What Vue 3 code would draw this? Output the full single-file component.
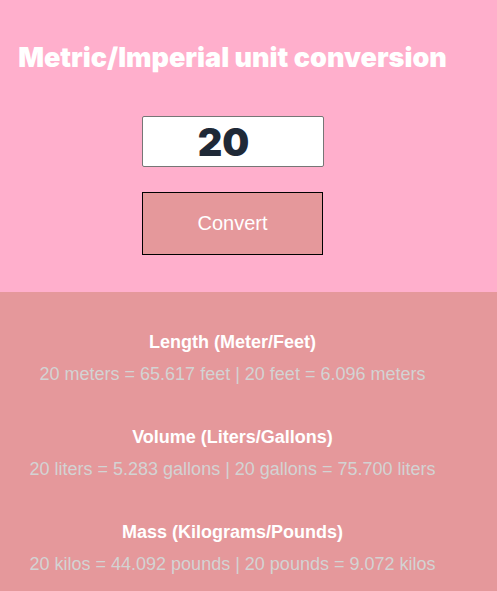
<script setup>
import { ref } from 'vue'

const amount = ref(20)
const shown = ref(20)

const groups = [
  { title: 'Length (Meter/Feet)', metric: 'meters', imperial: 'feet', toImperial: 3.28084, toMetric: 0.3048 },
  { title: 'Volume (Liters/Gallons)', metric: 'liters', imperial: 'gallons', toImperial: 0.264172, toMetric: 3.785 },
  { title: 'Mass (Kilograms/Pounds)', metric: 'kilos', imperial: 'pounds', toImperial: 2.20462, toMetric: 0.453592 }
]

function describe(g) {
  const n = shown.value
  return `${n} ${g.metric} = ${(n * g.toImperial).toFixed(3)} ${g.imperial} | ${n} ${g.imperial} = ${(n * g.toMetric).toFixed(3)} ${g.metric}`
}
</script>

<template>
  <main class="page">
    <form class="converter" @submit.prevent="shown = Number(amount)">
      <h1>Metric/Imperial unit conversion</h1>
      <input v-model="amount" class="amount" type="number" aria-label="Value to convert" />
      <button class="convert" type="submit">Convert</button>
    </form>
    <div class="results">
      <section v-for="g in groups" :key="g.title" class="group">
        <h2>{{ g.title }}</h2>
        <p>{{ describe(g) }}</p>
      </section>
    </div>
  </main>
</template>

<style>
body {
  background: #e5989b;
}
</style>

<style scoped>
.page {
  font-family: "Liberation Sans", Arial, sans-serif;
  text-align: center;
}
.converter {
  display: flex;
  flex-direction: column;
  align-items: center;
  padding: 40px 32px 37px 0;
  background: #ffafcc;
}
h1 {
  margin: 0 0 41px;
  color: #fff;
  font-family: Inter, "Liberation Sans", sans-serif;
  font-size: 27px;
  line-height: 35px;
  font-weight: 900;
}
.amount {
  box-sizing: border-box;
  width: 182px;
  height: 51px;
  padding: 0 18px 0 0;
  border: 1px solid #767676;
  border-radius: 2px;
  background: #fff;
  color: #1f2937;
  font-family: Inter, "Liberation Sans", sans-serif;
  font-size: 38px;
  font-weight: 900;
  text-align: center;
  appearance: textfield;
}
.amount::-webkit-inner-spin-button {
  appearance: none;
}
.convert {
  width: 181px;
  height: 63px;
  margin-top: 25px;
  border: 1px solid #000;
  background: #e5989b;
  color: #fff;
  font-family: inherit;
  font-size: 20px;
}
.results {
  display: grid;
  gap: 31px;
  padding: 34px 32px 11px 0;
  background: #e5989b;
}
h2,
p {
  margin: 0;
  font-size: 18px;
  line-height: 32px;
}
h2 {
  color: #fff;
  font-weight: 700;
}
p {
  color: #d3d3d3;
}
</style>
